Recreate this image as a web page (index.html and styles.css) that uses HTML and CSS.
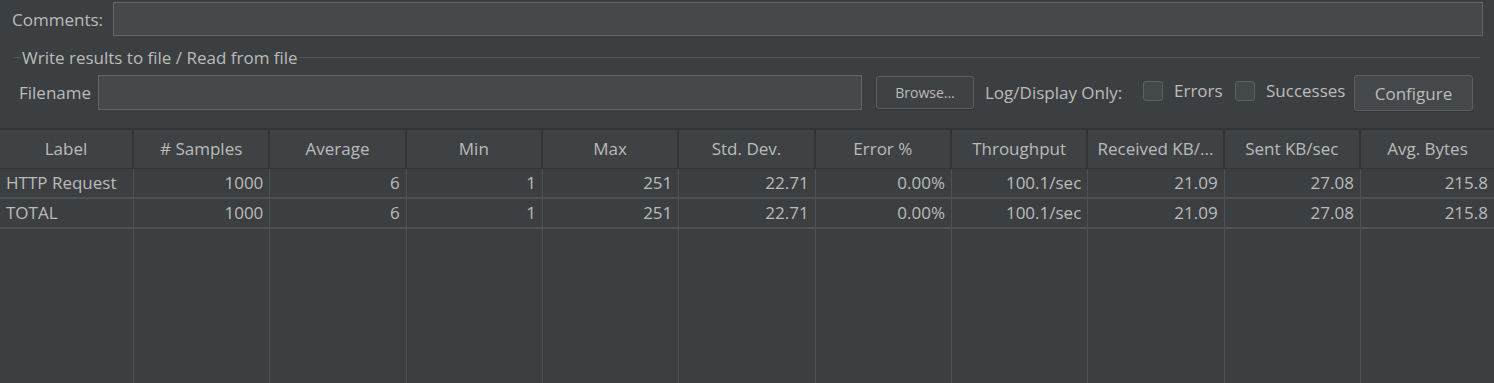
FILE: index.html
```html
<!DOCTYPE html>
<html lang="en">
<head>
    <meta charset="UTF-8">
    <title>Summary Report</title>
    <link rel="stylesheet" href="styles.css">
</head>
<body>
    <div class="comments-row">
        <span class="comments-label">Comments:</span>
        <input type="text" class="comments-input">
    </div>

    <div class="file-group">
        <div class="group-title">
            <span class="title-line short"></span>
            <span class="title-text">Write results to file / Read from file</span>
            <span class="title-line"></span>
        </div>
        <div class="file-row">
            <span class="filename-label">Filename</span>
            <input type="text" class="filename-input">
            <button class="btn browse-btn">Browse...</button>
            <span class="log-label">Log/Display Only:</span>
            <label class="check errors"><span class="box"></span>Errors</label>
            <label class="check successes"><span class="box"></span>Successes</label>
            <button class="btn configure-btn">Configure</button>
        </div>
    </div>

    <div class="results">
        <div class="row head">
            <div class="cell">Label</div>
            <div class="cell"># Samples</div>
            <div class="cell">Average</div>
            <div class="cell">Min</div>
            <div class="cell">Max</div>
            <div class="cell">Std. Dev.</div>
            <div class="cell">Error %</div>
            <div class="cell">Throughput</div>
            <div class="cell">Received KB/...</div>
            <div class="cell">Sent KB/sec</div>
            <div class="cell">Avg. Bytes</div>
        </div>
        <div class="row data">
            <div class="cell name">HTTP Request</div>
            <div class="cell">1000</div>
            <div class="cell">6</div>
            <div class="cell">1</div>
            <div class="cell">251</div>
            <div class="cell">22.71</div>
            <div class="cell">0.00%</div>
            <div class="cell">100.1/sec</div>
            <div class="cell">21.09</div>
            <div class="cell">27.08</div>
            <div class="cell">215.8</div>
        </div>
        <div class="row data">
            <div class="cell name">TOTAL</div>
            <div class="cell">1000</div>
            <div class="cell">6</div>
            <div class="cell">1</div>
            <div class="cell">251</div>
            <div class="cell">22.71</div>
            <div class="cell">0.00%</div>
            <div class="cell">100.1/sec</div>
            <div class="cell">21.09</div>
            <div class="cell">27.08</div>
            <div class="cell">215.8</div>
        </div>
        <div class="row filler">
            <div class="cell"></div>
            <div class="cell"></div>
            <div class="cell"></div>
            <div class="cell"></div>
            <div class="cell"></div>
            <div class="cell"></div>
            <div class="cell"></div>
            <div class="cell"></div>
            <div class="cell"></div>
            <div class="cell"></div>
            <div class="cell"></div>
        </div>
    </div>
</body>
</html>
```

FILE: styles.css
```css
body {
    margin: 0;
    padding: 0;
    background-color: #3c3f41;
    color: #bbbbbb;
    font-family: "Open Sans", "Noto Sans", sans-serif;
    font-size: 17px;
    height: 383px;
    overflow: hidden;
    display: flex;
    flex-direction: column;
}
input {
    font: inherit;
    color: #bbbbbb;
    background-color: #45494a;
    border: 1px solid #646464;
    outline: none;
    padding: 0 6px;
    box-sizing: border-box;
}
.comments-row {
    display: flex;
    align-items: center;
    height: 34px;
    margin-top: 2px;
    padding: 0 11px 0 12px;
}
.comments-label {
    width: 101px;
}
.comments-input {
    flex-grow: 1;
    height: 34px;
}
.file-group {
    padding: 0 14px 0 14px;
}
.group-title {
    display: flex;
    align-items: center;
    height: 24px;
    margin-top: 9px;
}
.title-line {
    flex-grow: 1;
    height: 1px;
    background-color: #55585a;
    margin-top: 1px;
}
.title-line.short {
    flex-grow: 0;
    width: 7px;
}
.title-text {
    padding: 0 1px;
}
.file-row {
    display: flex;
    align-items: center;
    height: 36px;
    margin-top: 5px;
    padding-left: 5px;
}
.filename-label {
    width: 79px;
}
.filename-input {
    width: 764px;
    height: 35px;
}
.btn {
    font: inherit;
    color: #bbbbbb;
    background-color: #3f4244;
    border: 1px solid #5e6060;
    border-radius: 3px;
    box-shadow: 0 1px 1px #313335;
    box-sizing: border-box;
    padding: 0;
}
.browse-btn {
    width: 98px;
    height: 33px;
    margin-left: 14px;
    font-size: 14px;
}
.log-label {
    margin-left: 11px;
    width: 158px;
}
.check {
    display: flex;
    align-items: center;
    margin-top: -3px;
    white-space: nowrap;
    flex-shrink: 0;
}
.check .box {
    width: 20px;
    height: 20px;
    flex-shrink: 0;
    box-sizing: border-box;
    border: 1px solid #5e6060;
    border-radius: 3px;
    background-color: #43494a;
    margin-right: 11px;
}
.check.errors {
    width: 92px;
}
.check.successes {
    width: 105px;
}
.configure-btn {
    width: 119px;
    height: 36px;
    flex-shrink: 0;
    margin-left: 14px;
    margin-top: 2px;
    background-color: #44484a;
}
.results {
    margin-top: 18px;
    flex-grow: 1;
    display: flex;
    flex-direction: column;
    border-top: 2px solid #323436;
}
.row {
    display: grid;
    grid-template-columns: 134px repeat(9, 136.33px) 1fr;
}
.row .cell {
    border-right: 1px solid #4d5153;
    padding: 0 6px;
    text-align: right;
    white-space: nowrap;
    overflow: hidden;
}
.row .cell:last-child {
    border-right: none;
}
.head {
    height: 38px;
    background-color: #3e4244;
    border-bottom: 1px solid #323436;
}
.head .cell {
    text-align: center;
    line-height: 38px;
    border-right: 2px solid #323436;
}
.data {
    height: 28px;
    border-bottom: 2px solid #4d5153;
}
.data .cell {
    line-height: 28px;
}
.data .cell.name {
    text-align: left;
}
.filler {
    flex-grow: 1;
}
```
